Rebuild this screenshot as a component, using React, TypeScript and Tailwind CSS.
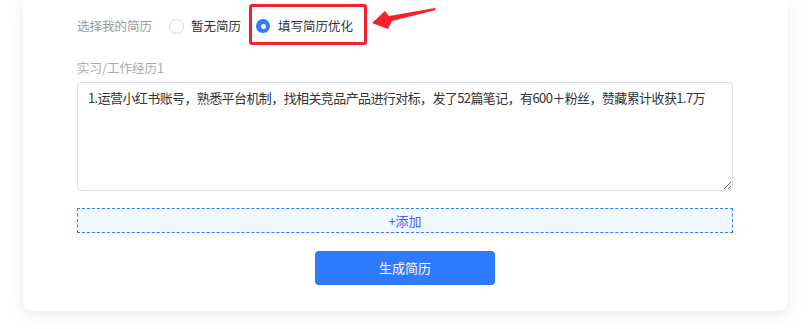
import { useState } from "react";

const FONT = {
  fontFamily: '"Noto Sans CJK SC", "Microsoft YaHei", sans-serif',
};

function Radio({ checked, label }: { checked: boolean; label: string }) {
  return (
    <label className={checked ? "flex items-center gap-[8px] cursor-pointer" : "flex items-center gap-[7px] cursor-pointer"}>
      <span
        className={
          checked
            ? "flex h-[14px] w-[14px] items-center justify-center rounded-full bg-[#2f7bff]"
            : "h-[15px] w-[15px] rounded-full border border-[#d9d9d9] bg-white"
        }
      >
        {checked && <span className="h-[5px] w-[5px] rounded-full bg-white" />}
      </span>
      <span className="text-[12.5px] text-[#333]">{label}</span>
    </label>
  );
}

export default function App() {
  const [text, setText] = useState(
    "1.运营小红书账号，熟悉平台机制，找相关竞品产品进行对标，发了52篇笔记，有600＋粉丝，赞藏累计收获1.7万",
  );

  return (
    <div className="relative min-h-[329px] bg-white" style={FONT}>
      <div className="pl-[23px] pr-[20px]">
        <div className="rounded-b-[10px] bg-white pl-[54px] pr-[55px] pb-[26px] pt-[16px] shadow-[0_4px_14px_rgba(200,215,225,0.45)]">
          {/* resume choice */}
          <div className="flex h-[20px] items-center">
            <span className="text-[12.5px] text-[#999]">选择我的简历</span>
            <div className="ml-[17px] flex items-center gap-[15px]">
              <Radio checked={false} label="暂无简历" />
              <div className="relative">
                <Radio checked label="填写简历优化" />
                <span className="absolute left-[-7px] top-[-13px] h-[41px] w-[118px] rounded-[3px] border-[3px] border-[#f5222d]" />
              </div>
            </div>
          </div>

          <div className="mt-[23px] text-[12.5px] leading-[18px] text-[#aaa]">实习/工作经历1</div>

          <textarea
            value={text}
            onChange={(e) => setText(e.target.value)}
            className="mt-[5px] block h-[109px] w-full resize-y rounded-[4px] border border-[#dcdfe6] px-[10px] py-[4px] text-[13px] leading-[22px] tracking-[-0.6px] text-[#333] outline-none"
            style={FONT}
          />

          <button
            className="mt-[17px] flex h-[25px] w-full items-center justify-center border border-dashed border-[#2f7bff] bg-[#f0f7ff] text-[13px] text-[#4a62f0]"
            style={FONT}
          >
            +添加
          </button>

          <div className="mt-[18px] flex justify-center">
            <button
              className="h-[34px] w-[180px] rounded-[4px] bg-[#2f7bff] text-[13px] text-white"
              style={FONT}
            >
              生成简历
            </button>
          </div>
        </div>
      </div>

      {/* red annotation arrow */}
      <svg className="absolute left-[370px] top-0" width="70" height="32" viewBox="0 0 70 32">
        <polygon points="2,23 15,11 19,16 65,8 66,10 22,21 18,29" fill="#f5222d" />
      </svg>
    </div>
  );
}
